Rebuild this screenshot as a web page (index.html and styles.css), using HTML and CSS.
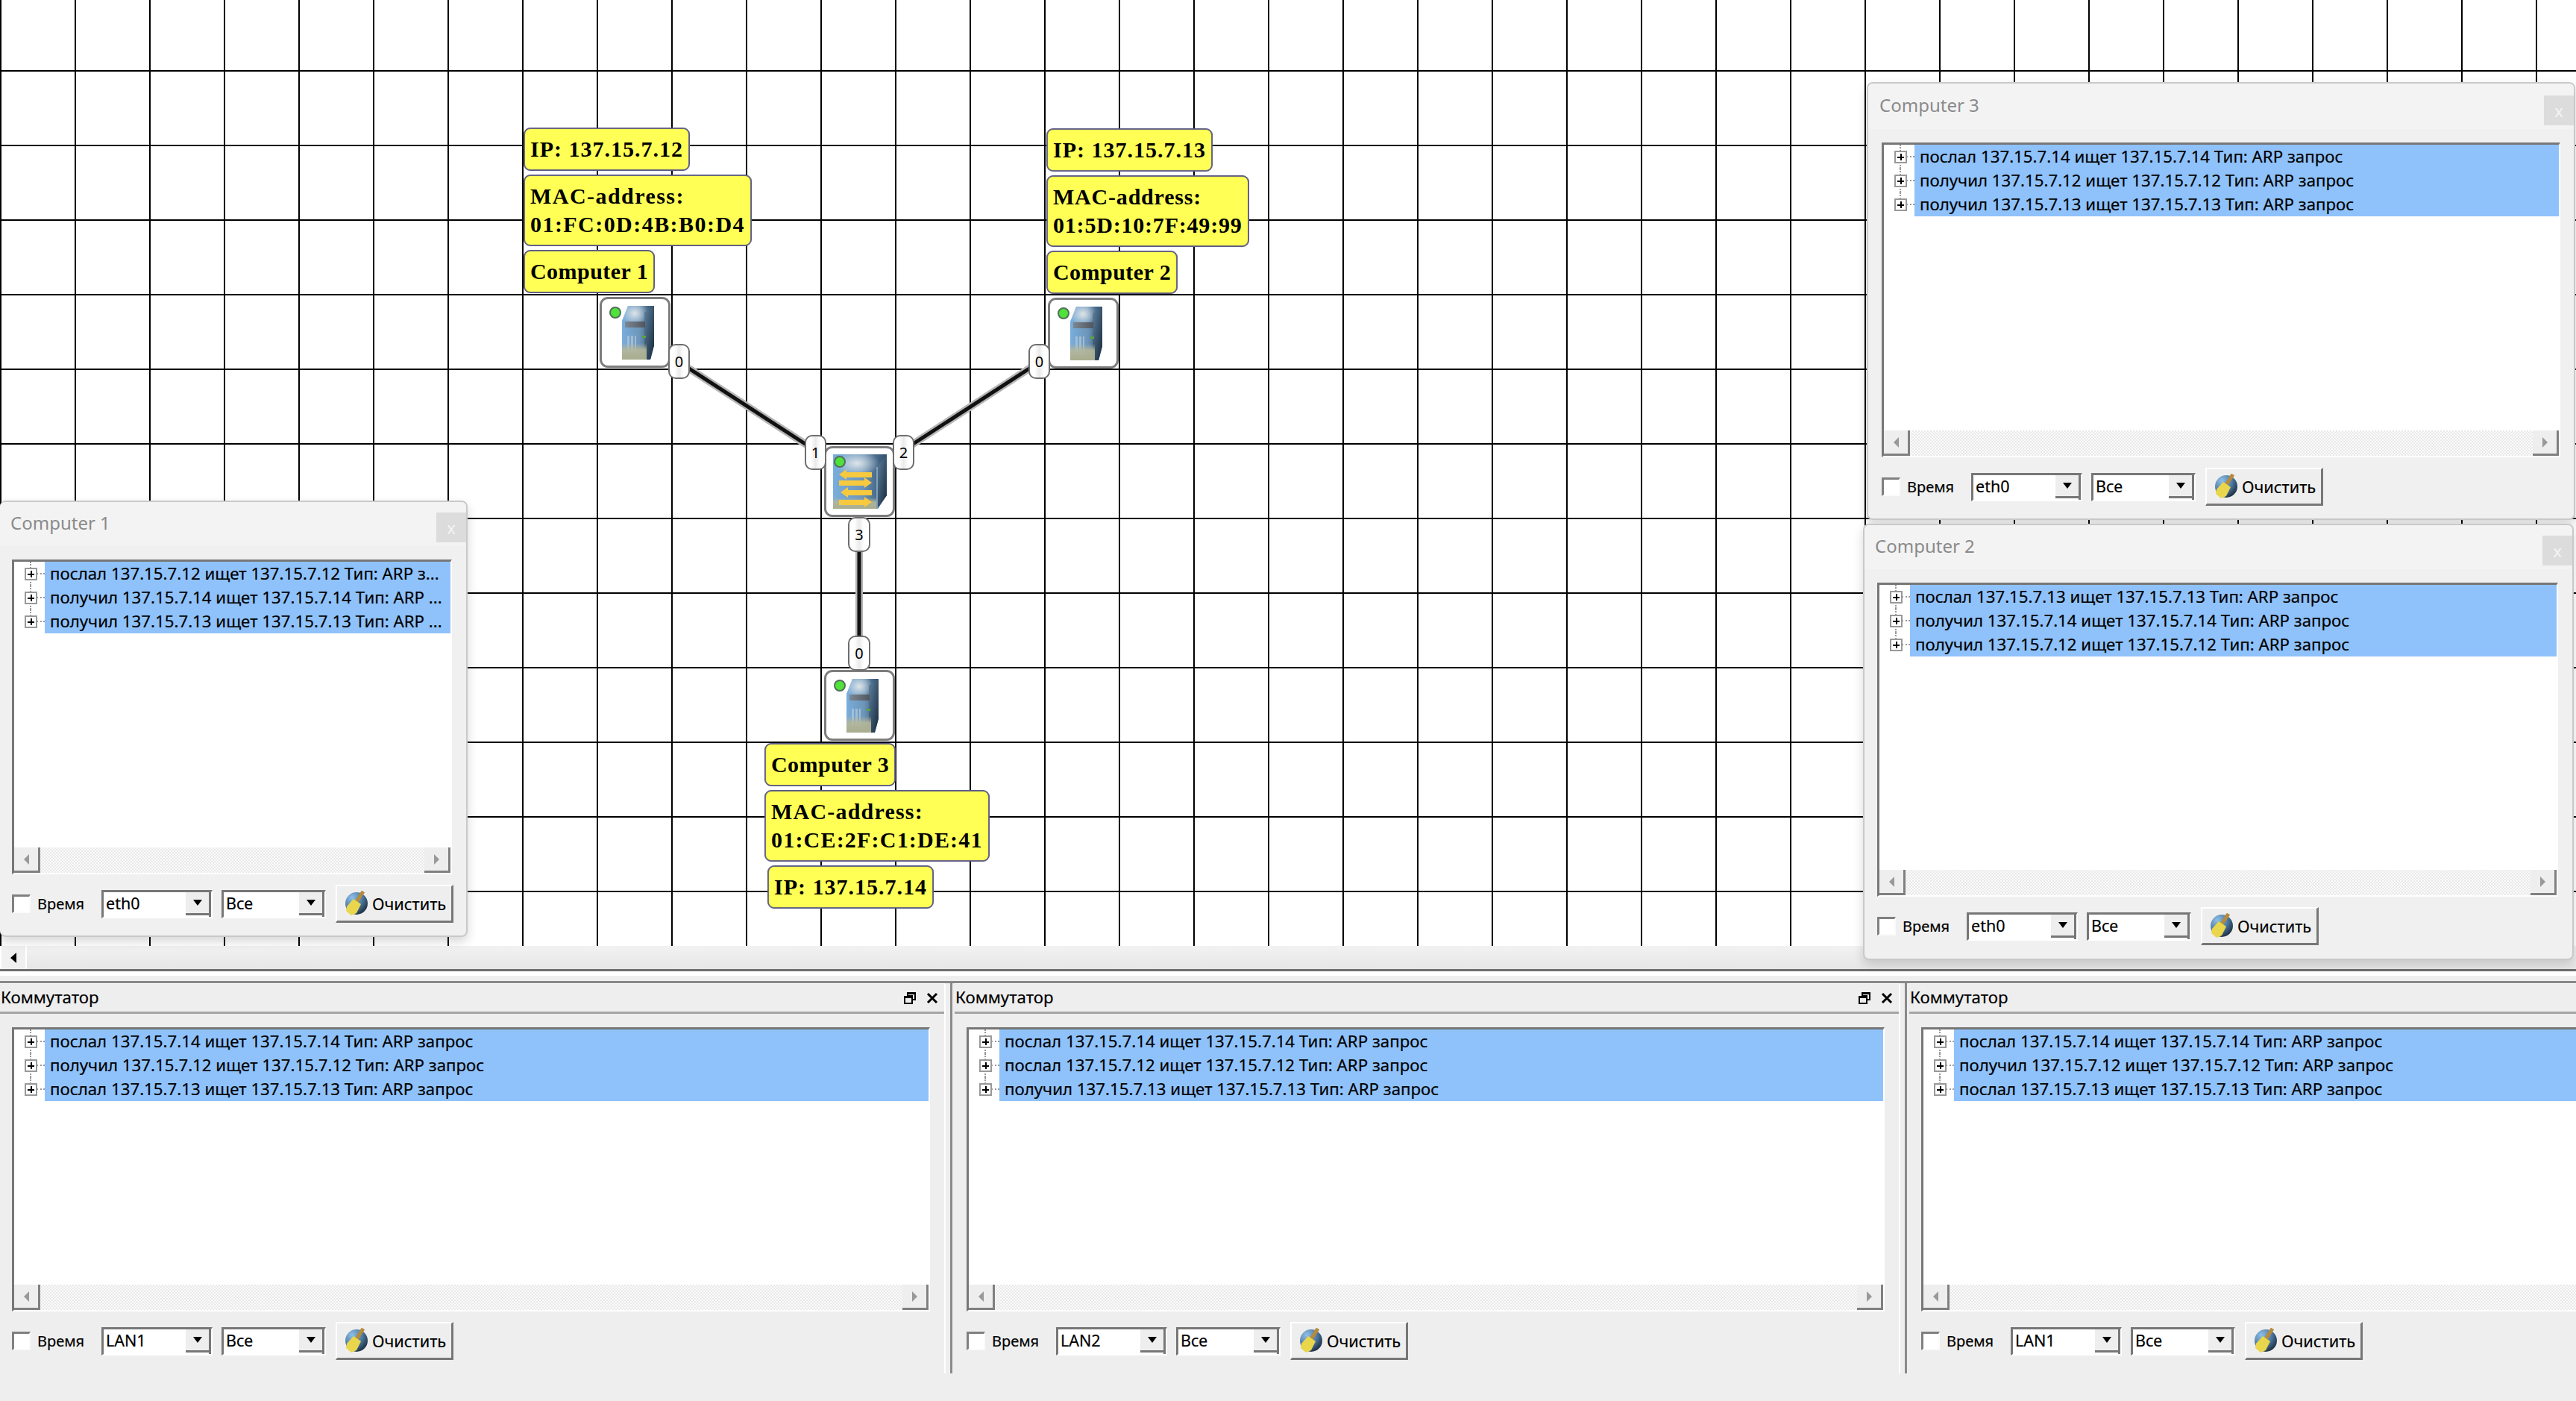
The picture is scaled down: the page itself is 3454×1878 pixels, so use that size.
FILE: index.html
```html
<!DOCTYPE html>
<html lang="ru">
<head>
<meta charset="utf-8">
<title>Network simulator</title>
<link rel="stylesheet" href="styles.css">
</head>
<body>
<svg class="defs" aria-hidden="true">
  <defs>
    <linearGradient id="gFront" x1="0" y1="0" x2="1" y2="0">
      <stop offset="0" stop-color="#79aedd"/><stop offset=".55" stop-color="#6d95b8"/><stop offset="1" stop-color="#2f4c69"/>
    </linearGradient>
    <radialGradient id="gGlow" cx=".5" cy=".5" r=".5">
      <stop offset="0" stop-color="#e4e8ea" stop-opacity=".95"/><stop offset="1" stop-color="#e4e8ea" stop-opacity="0"/>
    </radialGradient>
    <linearGradient id="gSide" x1="0" y1="0" x2="1" y2="1">
      <stop offset="0" stop-color="#5f83a1"/><stop offset="1" stop-color="#16283a"/>
    </linearGradient>
    <linearGradient id="gBase" x1="0" y1="0" x2="0" y2="1">
      <stop offset="0" stop-color="#b5b79a" stop-opacity="0"/><stop offset=".4" stop-color="#b5b79a" stop-opacity=".9"/><stop offset="1" stop-color="#a9ad8e"/>
    </linearGradient>
    <linearGradient id="gBar" x1="0" y1="0" x2="1" y2="0">
      <stop offset="0" stop-color="#7d8792"/><stop offset="1" stop-color="#50565e"/>
    </linearGradient>
    <radialGradient id="gGlobe" cx=".3" cy=".25" r=".9">
      <stop offset="0" stop-color="#8fbfe6"/><stop offset=".5" stop-color="#4f7da6"/><stop offset="1" stop-color="#121c2a"/>
    </radialGradient>
    <symbol id="i-server" viewBox="0 0 43 72">
      <path d="M0 20 8 0H43V53L38 72H0Z" fill="url(#gFront)"/>
      <ellipse cx="17" cy="10" rx="18" ry="16" fill="url(#gGlow)"/>
      <path d="M30 9 43 0V53L38 72H30Z" fill="url(#gSide)"/>
      <rect x="4" y="21" width="27" height="8" fill="url(#gBar)"/>
      <path d="M7 40h3v24H7zM12 40h3v24h-3zM17 40h2v24h-2z" fill="#b7cbdc" opacity=".7"/>
      <rect x="27" y="40" width="5" height="3" fill="#57a53a"/>
      <path d="M0 50H33V72H0Z" fill="url(#gBase)"/>
    </symbol>
    <symbol id="i-switch" viewBox="0 0 72 73">
      <path d="M0 0H72V55L60 73H0Z" fill="url(#gFront)"/>
      <ellipse cx="32" cy="12" rx="30" ry="17" fill="url(#gGlow)"/>
      <path d="M72 0 59 17V73L72 55Z" fill="url(#gSide)"/>
      <path d="M59 17V73" stroke="#8fb2cf" stroke-width="1.5"/>
      <path d="M0 58H58V73H0Z" fill="url(#gBase)"/>
      <path d="M8 27 18 20V24H52V31H18V34ZM52 38 42 31V35H8V42H42V45ZM10 51 20 44V48H52V55H20V58ZM52 64 42 57V61H8V68H42V71Z" fill="#f6c93f"/>
    </symbol>
    <symbol id="i-broom" viewBox="0 0 32 34">
      <circle cx="16" cy="17" r="15" fill="url(#gGlobe)"/>
      <path d="M25 1 16 15" stroke="#b48a3e" stroke-width="5"/>
      <path d="M12 11 22 18 16 30 9 33 2 27 3 21Z" fill="#e9d64d"/>
    </symbol>
    <symbol id="i-restore" viewBox="0 0 16 16">
      <path d="M5 1h10v9h-4V5H5Z" fill="none" stroke="#000" stroke-width="2"/>
      <path d="M5 1h10v2H5Z" fill="#000"/>
      <path d="M1 6h10v9H1Z" fill="#eee" stroke="#000" stroke-width="2"/>
      <path d="M1 6h10v2H1Z" fill="#000"/>
    </symbol>
    <symbol id="i-close" viewBox="0 0 16 16">
      <path d="M2 2 14 14M14 2 2 14" stroke="#000" stroke-width="3"/>
    </symbol>
  </defs>
</svg>

<div class="app">
  <main class="canvas">
    <svg class="wires" width="3454" height="1268" aria-hidden="true">
      <g class="wire-halo">
        <line x1="910" y1="485" x2="1095" y2="605"/>
        <line x1="1394" y1="485" x2="1209" y2="605"/>
        <line x1="1152" y1="735" x2="1152" y2="857"/>
      </g>
      <g class="wire-core">
        <line x1="910" y1="485" x2="1095" y2="605"/>
        <line x1="1394" y1="485" x2="1209" y2="605"/>
        <line x1="1152" y1="735" x2="1152" y2="857"/>
      </g>
    </svg>

    <div class="labels labels-c1">
      <div class="tag tag-ip">IP: 137.15.7.12</div>
      <div class="tag tag-mac">MAC-address:<br>01:FC:0D:4B:B0:D4</div>
      <div class="tag">Computer 1</div>
    </div>
    <div class="labels labels-c2">
      <div class="tag tag-ip">IP: 137.15.7.13</div>
      <div class="tag tag-mac">MAC-address:<br>01:5D:10:7F:49:99</div>
      <div class="tag">Computer 2</div>
    </div>
    <div class="labels labels-c3">
      <div class="tag">Computer 3</div>
      <div class="tag tag-mac">MAC-address:<br>01:CE:2F:C1:DE:41</div>
      <div class="tag tag-ip tag-ip3">IP: 137.15.7.14</div>
    </div>

    <div class="device dev-c1"><span class="led"></span><svg class="ico-server"><use href="#i-server"/></svg></div>
    <div class="device dev-c2"><span class="led"></span><svg class="ico-server"><use href="#i-server"/></svg></div>
    <div class="device dev-c3"><span class="led"></span><svg class="ico-server"><use href="#i-server"/></svg></div>
    <div class="device dev-sw"><span class="led"></span><svg class="ico-switch"><use href="#i-switch"/></svg></div>

    <div class="port port-c1">0</div>
    <div class="port port-c2">0</div>
    <div class="port port-c3">0</div>
    <div class="port port-s1">1</div>
    <div class="port port-s2">2</div>
    <div class="port port-s3">3</div>
  </main>

  <div class="hscroll"><div class="hscroll-btn"><span class="tri-left"></span></div></div>
  <div class="sash"></div>

  <section class="dock">
    <div class="panel">
      <div class="panel-main">
        <header class="dock-title"><span class="dock-name">Коммутатор</span><span class="dock-icons"><svg class="ico16"><use href="#i-restore"/></svg><svg class="ico16"><use href="#i-close"/></svg></span></header>
        <div class="pane">
          <div class="tree">
            <div class="rows">
              <div class="row"><span class="gut"><i class="exp"></i></span><span class="lab">послал 137.15.7.14 ищет 137.15.7.14 Тип: ARP запрос</span></div>
              <div class="row"><span class="gut"><i class="exp"></i></span><span class="lab">получил 137.15.7.12 ищет 137.15.7.12 Тип: ARP запрос</span></div>
              <div class="row"><span class="gut"><i class="exp"></i></span><span class="lab">послал 137.15.7.13 ищет 137.15.7.13 Тип: ARP запрос</span></div>
            </div>
            <div class="tscroll"><div class="tbtn"><span class="tri-l"></span></div><div class="tbtn"><span class="tri-r"></span></div></div>
          </div>
          <div class="controls">
            <label class="time"><span class="check"></span><span class="time-text">Время</span></label>
            <div class="sel sel-a"><span class="sel-text">LAN1</span><span class="sel-btn"><span class="tri-down"></span></span></div>
            <div class="sel sel-b"><span class="sel-text">Все</span><span class="sel-btn"><span class="tri-down"></span></span></div>
            <button class="clear" type="button"><svg class="ico-broom"><use href="#i-broom"/></svg>Очистить</button>
          </div>
        </div>
      </div>
      <div class="splitter"></div>
    </div>

    <div class="panel">
      <div class="panel-main">
        <header class="dock-title"><span class="dock-name">Коммутатор</span><span class="dock-icons"><svg class="ico16"><use href="#i-restore"/></svg><svg class="ico16"><use href="#i-close"/></svg></span></header>
        <div class="pane">
          <div class="tree">
            <div class="rows">
              <div class="row"><span class="gut"><i class="exp"></i></span><span class="lab">послал 137.15.7.14 ищет 137.15.7.14 Тип: ARP запрос</span></div>
              <div class="row"><span class="gut"><i class="exp"></i></span><span class="lab">послал 137.15.7.12 ищет 137.15.7.12 Тип: ARP запрос</span></div>
              <div class="row"><span class="gut"><i class="exp"></i></span><span class="lab">получил 137.15.7.13 ищет 137.15.7.13 Тип: ARP запрос</span></div>
            </div>
            <div class="tscroll"><div class="tbtn"><span class="tri-l"></span></div><div class="tbtn"><span class="tri-r"></span></div></div>
          </div>
          <div class="controls">
            <label class="time"><span class="check"></span><span class="time-text">Время</span></label>
            <div class="sel sel-a"><span class="sel-text">LAN2</span><span class="sel-btn"><span class="tri-down"></span></span></div>
            <div class="sel sel-b"><span class="sel-text">Все</span><span class="sel-btn"><span class="tri-down"></span></span></div>
            <button class="clear" type="button"><svg class="ico-broom"><use href="#i-broom"/></svg>Очистить</button>
          </div>
        </div>
      </div>
      <div class="splitter"></div>
    </div>

    <div class="panel">
      <div class="panel-main">
        <header class="dock-title"><span class="dock-name">Коммутатор</span></header>
        <div class="pane">
          <div class="tree">
            <div class="rows">
              <div class="row"><span class="gut"><i class="exp"></i></span><span class="lab">послал 137.15.7.14 ищет 137.15.7.14 Тип: ARP запрос</span></div>
              <div class="row"><span class="gut"><i class="exp"></i></span><span class="lab">получил 137.15.7.12 ищет 137.15.7.12 Тип: ARP запрос</span></div>
              <div class="row"><span class="gut"><i class="exp"></i></span><span class="lab">послал 137.15.7.13 ищет 137.15.7.13 Тип: ARP запрос</span></div>
            </div>
            <div class="tscroll"><div class="tbtn"><span class="tri-l"></span></div></div>
          </div>
          <div class="controls">
            <label class="time"><span class="check"></span><span class="time-text">Время</span></label>
            <div class="sel sel-a"><span class="sel-text">LAN1</span><span class="sel-btn"><span class="tri-down"></span></span></div>
            <div class="sel sel-b"><span class="sel-text">Все</span><span class="sel-btn"><span class="tri-down"></span></span></div>
            <button class="clear" type="button"><svg class="ico-broom"><use href="#i-broom"/></svg>Очистить</button>
          </div>
        </div>
      </div>
    </div>
  </section>

  <!-- floating windows -->
  <article class="win win-c1">
    <header class="win-title"><span class="win-name">Computer 1</span><span class="win-x">x</span></header>
    <div class="pane">
      <div class="tree">
        <div class="rows">
          <div class="row"><span class="gut"><i class="exp"></i></span><span class="lab">послал 137.15.7.12 ищет 137.15.7.12 Тип: ARP з...</span></div>
          <div class="row"><span class="gut"><i class="exp"></i></span><span class="lab">получил 137.15.7.14 ищет 137.15.7.14 Тип: ARP ...</span></div>
          <div class="row"><span class="gut"><i class="exp"></i></span><span class="lab">получил 137.15.7.13 ищет 137.15.7.13 Тип: ARP ...</span></div>
        </div>
        <div class="tscroll"><div class="tbtn"><span class="tri-l"></span></div><div class="tbtn"><span class="tri-r"></span></div></div>
      </div>
      <div class="controls">
        <label class="time"><span class="check"></span><span class="time-text">Время</span></label>
        <div class="sel sel-a"><span class="sel-text">eth0</span><span class="sel-btn"><span class="tri-down"></span></span></div>
        <div class="sel sel-b"><span class="sel-text">Все</span><span class="sel-btn"><span class="tri-down"></span></span></div>
        <button class="clear" type="button"><svg class="ico-broom"><use href="#i-broom"/></svg>Очистить</button>
      </div>
    </div>
  </article>

  <article class="win win-c3">
    <header class="win-title"><span class="win-name">Computer 3</span><span class="win-x">x</span></header>
    <div class="pane">
      <div class="tree">
        <div class="rows">
          <div class="row"><span class="gut"><i class="exp"></i></span><span class="lab">послал 137.15.7.14 ищет 137.15.7.14 Тип: ARP запрос</span></div>
          <div class="row"><span class="gut"><i class="exp"></i></span><span class="lab">получил 137.15.7.12 ищет 137.15.7.12 Тип: ARP запрос</span></div>
          <div class="row"><span class="gut"><i class="exp"></i></span><span class="lab">получил 137.15.7.13 ищет 137.15.7.13 Тип: ARP запрос</span></div>
        </div>
        <div class="tscroll"><div class="tbtn"><span class="tri-l"></span></div><div class="tbtn"><span class="tri-r"></span></div></div>
      </div>
      <div class="controls">
        <label class="time"><span class="check"></span><span class="time-text">Время</span></label>
        <div class="sel sel-a"><span class="sel-text">eth0</span><span class="sel-btn"><span class="tri-down"></span></span></div>
        <div class="sel sel-b"><span class="sel-text">Все</span><span class="sel-btn"><span class="tri-down"></span></span></div>
        <button class="clear" type="button"><svg class="ico-broom"><use href="#i-broom"/></svg>Очистить</button>
      </div>
    </div>
  </article>

  <article class="win win-c2">
    <header class="win-title"><span class="win-name">Computer 2</span><span class="win-x">x</span></header>
    <div class="pane">
      <div class="tree">
        <div class="rows">
          <div class="row"><span class="gut"><i class="exp"></i></span><span class="lab">послал 137.15.7.13 ищет 137.15.7.13 Тип: ARP запрос</span></div>
          <div class="row"><span class="gut"><i class="exp"></i></span><span class="lab">получил 137.15.7.14 ищет 137.15.7.14 Тип: ARP запрос</span></div>
          <div class="row"><span class="gut"><i class="exp"></i></span><span class="lab">получил 137.15.7.12 ищет 137.15.7.12 Тип: ARP запрос</span></div>
        </div>
        <div class="tscroll"><div class="tbtn"><span class="tri-l"></span></div><div class="tbtn"><span class="tri-r"></span></div></div>
      </div>
      <div class="controls">
        <label class="time"><span class="check"></span><span class="time-text">Время</span></label>
        <div class="sel sel-a"><span class="sel-text">eth0</span><span class="sel-btn"><span class="tri-down"></span></span></div>
        <div class="sel sel-b"><span class="sel-text">Все</span><span class="sel-btn"><span class="tri-down"></span></span></div>
        <button class="clear" type="button"><svg class="ico-broom"><use href="#i-broom"/></svg>Очистить</button>
      </div>
    </div>
  </article>
</div>
</body>
</html>
```
FILE: styles.css
```css
* { box-sizing: border-box; }
html, body { margin: 0; height: 100%; overflow: hidden; }
body { background: #eeeeee; font-family: "Noto Sans", "Open Sans", sans-serif; font-size: 22.25px; color: #000; -webkit-text-stroke: .2px; }
.defs { position: absolute; width: 0; height: 0; }

.app { position: relative; width: 3454px; height: 1878px; overflow: hidden; display: flex; flex-direction: column; background: #eeeeee; }

/* canvas */
.canvas {
  position: relative; height: 1268px; flex: none; overflow: hidden; background-color: #fff;
  background-image:
    linear-gradient(90deg, #000 2px, transparent 2px),
    linear-gradient(180deg, #000 2px, transparent 2px);
  background-size: 100px 100px;
  background-position: 0 0, 0 94px;
}
.wires { position: absolute; left: 0; top: 0; }
.wire-halo line { stroke: #b5b5b5; stroke-width: 10; }
.wire-core line { stroke: #111; stroke-width: 5; }

.labels { position: absolute; display: flex; flex-direction: column; align-items: flex-start; gap: 5px; }
.labels-c1 { left: 702px; top: 171px; }
.labels-c2 { left: 1403px; top: 172px; }
.labels-c3 { left: 1025px; top: 996px; }
.tag {
  background: #ffff55; border: 2px solid #6f6f7c; border-radius: 9px; outline: 1px solid rgba(60, 60, 150, .45); outline-offset: -1px;
  padding: 8px 7px; font: bold 30px/38px "Liberation Serif", serif; letter-spacing: .45px; white-space: nowrap; -webkit-text-stroke: 0;
}
.tag-ip { letter-spacing: 1px; }
.tag-mac { letter-spacing: 1.45px; }
.labels-c2 .tag-mac { letter-spacing: .8px; }
.labels-c3 .tag-mac { letter-spacing: 1.2px; }
.tag-ip3 { margin-left: 4px; }

.device { position: absolute; width: 95px; height: 95px; background: #fff; border: 3px solid #7d7d7d; border-radius: 11px; display: flex; align-items: center; justify-content: center; }
.dev-c1 { left: 804px; top: 398px; }
.dev-c2 { left: 1405px; top: 399px; }
.dev-c3 { left: 1105px; top: 898px; }
.dev-sw { left: 1105px; top: 598px; }
.led { position: absolute; left: 10px; top: 10px; width: 16px; height: 16px; border-radius: 50%; background: #4fe23b; border: 2px solid #53705a; z-index: 1; }
.ico-server { width: 43px; height: 72px; margin-left: 8px; }
.ico-switch { width: 72px; height: 73px; }

.port { position: absolute; width: 29px; height: 47px; background: linear-gradient(90deg, #fff 25%, #eaeaea 50%, #fff 75%); border: 2px solid #6e6e6e; border-radius: 10px; display: flex; align-items: center; justify-content: center; font-size: 20px; -webkit-text-stroke: 0; }
.port-c1 { left: 896px; top: 461px; }
.port-c2 { left: 1379px; top: 461px; }
.port-c3 { left: 1137px; top: 852px; width: 30px; }
.port-s1 { left: 1079px; top: 583px; }
.port-s2 { left: 1197px; top: 583px; }
.port-s3 { left: 1137px; top: 693px; width: 30px; }

/* horizontal bar below the canvas */
.hscroll { height: 34px; flex: none; background: linear-gradient(180deg, #f2f2f2, #e6e6e6); border-bottom: 3px solid #6e6e6e; }
.hscroll-btn { width: 36px; height: 100%; background: #f0f0f0; border-left: 2px solid #fff; border-right: 2px solid #fff; display: flex; align-items: center; justify-content: center; }
.tri-left { width: 0; height: 0; border: 7px solid transparent; border-left-width: 0; border-right: 8px solid #000; }
.sash { height: 16px; flex: none; background: #eee; border-top: 6px solid #fff; border-bottom: 3px solid #888; }

/* docked panels */
.dock { display: grid; grid-template-columns: repeat(3, 1280px); height: 523px; flex: none; }
.panel { display: flex; min-width: 0; }
.panel-main { width: 1266px; flex: none; display: flex; flex-direction: column; background: #eee; }
.splitter { width: 14px; flex: none; position: relative; background: linear-gradient(90deg, #fff 2px, #eee 2px); }
.splitter::after { content: ""; position: absolute; top: 0; bottom: 0; right: 3px; width: 3px; background: #8a8a8a; }
.dock-title { height: 41px; flex: none; margin-left: -3px; padding-left: 4px; display: flex; align-items: center; justify-content: space-between; border-bottom: 3px solid #a5a5a5; border-top: 1px solid #fff; }
.dock-name { margin-top: -3px; }
.dock-icons { display: flex; gap: 14px; padding-right: 8px; align-items: center; }
.ico16 { width: 16px; height: 16px; }

.pane { flex: 1; min-height: 0; display: flex; flex-direction: column; padding: 18px 19px 18px 16px; }
.tree { flex: 1; min-height: 0; display: flex; flex-direction: column; background: #fff; border-top: 3px solid #777; border-left: 3px solid #777; border-right: 2px solid #fff; border-bottom: 2px solid #fff; }
.rows { flex: 1; min-height: 0; }
.row { display: flex; height: 32px; }
.gut { width: 41px; flex: none; position: relative; }
.gut::before { content: ""; position: absolute; left: 21px; top: 0; bottom: 0; border-left: 2px dotted #999; }
.row:last-child .gut::before { bottom: 50%; }
.gut::after { content: ""; position: absolute; left: 30px; right: 0; top: 15px; border-top: 2px dotted #999; }
.exp { position: absolute; z-index: 1; left: 14px; top: 8px; width: 17px; height: 17px; background: #fff; border: 2px solid #999; }
.exp::before { content: ""; position: absolute; left: 2px; right: 2px; top: 5.5px; height: 2px; background: #000; }
.exp::after { content: ""; position: absolute; top: 2px; bottom: 2px; left: 5.5px; width: 2px; background: #000; }
.lab { flex: 1; min-width: 0; background: #8fc2fb; padding-left: 7px; line-height: 32px; white-space: nowrap; overflow: hidden; }

.tscroll { height: 34px; flex: none; display: flex; justify-content: space-between; background: repeating-conic-gradient(#e9e9e9 0 25%, #fbfbfb 0 50%) 0 0 / 4px 4px; }
.tbtn { width: 35px; height: 34px; background: #eee; border-right: 3px solid #808080; border-bottom: 3px solid #808080; display: flex; align-items: center; justify-content: center; }
.tri-l { width: 0; height: 0; border: 7px solid transparent; border-left-width: 0; border-right: 7px solid #999; }
.tri-r { width: 0; height: 0; border: 7px solid transparent; border-right-width: 0; border-left: 7px solid #999; }

.controls { height: 51px; margin-top: 14px; flex: none; display: flex; align-items: center; gap: 12px; }
.time { width: 108px; flex: none; display: flex; align-items: center; gap: 9px; }
.time-text { font-size: 20px; margin-top: -1px; }
.check { width: 25px; height: 25px; flex: none; background: #fff; border-top: 3px solid #808080; border-left: 3px solid #808080; border-right: 2px solid #fafafa; border-bottom: 2px solid #fafafa; }
.sel { height: 38px; display: flex; background: #fff; border-top: 3px solid #777; border-left: 3px solid #777; border-right: 2px solid #fff; border-bottom: 2px solid #fff; box-shadow: inset -3px 0 0 #777; }
.sel-a { width: 149px; flex: none; }
.sel-b { width: 140px; flex: none; }
.sel-text { flex: 1; padding-left: 3px; line-height: 30px; font-size: 21.5px; }
.sel-btn { width: 34px; height: 31px; background: #eee; border-right: 3px solid #777; border-bottom: 3px solid #777; display: flex; align-items: center; justify-content: center; }
.tri-down { width: 0; height: 0; border: 6.5px solid transparent; border-bottom-width: 0; border-top: 8px solid #000; }
.clear { width: 158px; height: 51px; flex: none; padding: 0 0 0 10px; margin: 0 0 0 1px; background: #eee; border: 0; border-top: 2px solid #fff; border-left: 2px solid #fff; border-right: 3px solid #777; border-bottom: 3px solid #777; display: flex; align-items: center; gap: 5px; font: inherit; font-size: 21.75px; color: inherit; }
.ico-broom { width: 32px; height: 34px; flex: none; }

/* floating windows */
.win { position: absolute; z-index: 5; display: flex; flex-direction: column; background: #f0f0f0; border: 2px solid #c9c9c9; border-radius: 8px; box-shadow: 0 6px 14px rgba(0, 0, 0, .16); }
.win .pane { padding-top: 18px; padding-bottom: 17px; }
.win-title { height: 59px; flex: none; background: #f3f3f3; display: flex; justify-content: space-between; align-items: center; font-size: 24px; color: #8a8a8a; border-radius: 6px 6px 0 0; -webkit-text-stroke: 0; }
.win-name { margin-top: -4px; }
.win-x { width: 40px; height: 40px; align-self: flex-end; margin-bottom: 5px; background: #dcdcdc; color: #f4f4f4; display: flex; align-items: center; justify-content: center; font-size: 22px; }
.win-c1 { left: 0; top: 671px; width: 627px; height: 585px; border-left: 0; }
.win-c1 .win-title { padding-left: 14px; }
.win-c1 .pane { padding-left: 16px; padding-right: 19px; }
.win-c3 { left: 2503px; top: 110px; width: 950px; height: 587px; }
.win-c3 .win-title { padding-left: 15px; height: 61px; }
.win-c3 .pane { padding-left: 18px; padding-right: 18px; }
.win-c2 { left: 2498px; top: 702px; width: 953px; height: 585px; }
.win-c2 .win-title { padding-left: 14px; }
.win-c2 .pane { padding-left: 17px; padding-right: 19px; padding-bottom: 18px; }
```
